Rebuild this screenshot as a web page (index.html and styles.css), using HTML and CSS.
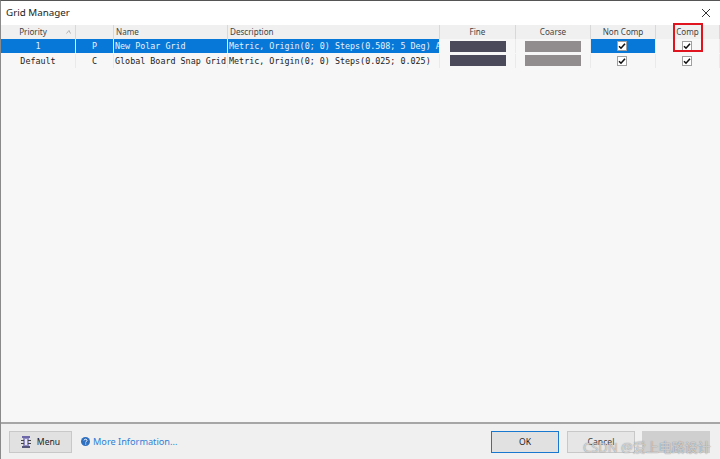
FILE: index.html
```html
<!DOCTYPE html>
<html lang="en">
<head>
<meta charset="utf-8">
<title>Grid Manager</title>
<link rel="stylesheet" href="styles.css">
</head>
<body>
<div class="window">
  <header class="titlebar">
    <span class="title">Grid Manager</span>
    <svg class="close" width="10" height="10" viewBox="0 0 10 10"><path d="M1 1L9 9M9 1L1 9" stroke="#333" stroke-width="1" fill="none"/></svg>
  </header>
  <main class="grid-area">
    <div class="row head">
      <div class="hc center priority">Priority<svg class="sort" width="5" height="4" viewBox="0 0 5 4"><path d="M0.5 3.5L3 0.5L4.5 3.5" stroke="#999" stroke-width="0.7" fill="none"/></svg></div>
      <div class="hc"></div>
      <div class="hc">Name</div>
      <div class="hc">Description</div>
      <div class="hc center">Fine</div>
      <div class="hc center">Coarse</div>
      <div class="hc center">Non Comp</div>
      <div class="hc center">Comp</div>
    </div>
    <div class="row data">
      <div class="c mono center sel">1</div>
      <div class="c mono center sel">P</div>
      <div class="c mono sel">New Polar Grid</div>
      <div class="c mono sel">Metric, Origin(0; 0) Steps(0.508; 5 Deg) A</div>
      <div class="c swatch-cell"><span class="swatch fine"></span></div>
      <div class="c swatch-cell"><span class="swatch coarse"></span></div>
      <div class="c check-cell sel"><span class="check"><svg width="8" height="8" viewBox="0 0 8 8"><path d="M1 4.2L3 6.2L7 1.8" stroke="#111" stroke-width="1.6" fill="none"/></svg></span></div>
      <div class="c check-cell"><span class="check"><svg width="8" height="8" viewBox="0 0 8 8"><path d="M1 4.2L3 6.2L7 1.8" stroke="#111" stroke-width="1.6" fill="none"/></svg></span></div>
    </div>
    <div class="row data">
      <div class="c mono center">Default</div>
      <div class="c mono center">C</div>
      <div class="c mono">Global Board Snap Grid</div>
      <div class="c mono">Metric, Origin(0; 0) Steps(0.025; 0.025)</div>
      <div class="c swatch-cell"><span class="swatch fine"></span></div>
      <div class="c swatch-cell"><span class="swatch coarse"></span></div>
      <div class="c check-cell"><span class="check"><svg width="8" height="8" viewBox="0 0 8 8"><path d="M1 4.2L3 6.2L7 1.8" stroke="#111" stroke-width="1.6" fill="none"/></svg></span></div>
      <div class="c check-cell"><span class="check"><svg width="8" height="8" viewBox="0 0 8 8"><path d="M1 4.2L3 6.2L7 1.8" stroke="#111" stroke-width="1.6" fill="none"/></svg></span></div>
    </div>
    <div class="highlight"></div>
  </main>
  <footer class="footer">
    <button class="btn menu">
      <svg width="10" height="12" viewBox="0 0 10 12"><path d="M1 0h8v2H1z" fill="#6f68a8"/><path d="M2 2h6v8H2z" fill="#8f8bc4"/><path d="M0 4h3v1H0zM0 7h3v1H0zM7 4h3v1H7zM7 7h3v1H7z" fill="#444"/><path d="M1 10h8v2H1z" fill="#55557a"/><path d="M4 3h2v6H4z" fill="#e8e8f4"/></svg>
      <span>Menu</span>
    </button>
    <a class="info">
      <svg width="9" height="9" viewBox="0 0 9 9"><circle cx="4.5" cy="4.5" r="4.5" fill="#2f6fc0"/><path d="M3 3.4c.2-1.6 3-1.6 3 0 0 1-1.3 1-1.3 2.1" stroke="#fff" fill="none"/><path d="M4.2 6.6h1v1h-1z" fill="#fff"/></svg>
      More Information...
    </a>
    <div class="spacer"></div>
    <button class="btn ok">OK</button>
    <button class="btn cancel">Cancel</button>
    <button class="btn apply"></button>
    <div class="watermark">CSDN @爱上电路设计</div>
  </footer>
</div>
</body>
</html>
```
FILE: styles.css
```css
* { box-sizing: border-box; }
html, body { margin: 0; height: 100%; }
body { font-family: "Noto Sans", "Open Sans", sans-serif; color: #333; overflow: hidden; }
.window {
  width: 720px; height: 459px;
  display: flex; flex-direction: column;
  border-top: 1px solid #555;
  border-left: 1px solid #8a8a8a;
  background: #fff;
}
.titlebar {
  height: 24px; flex: none;
  display: flex; align-items: center; justify-content: space-between;
  padding: 0 9px 1px 5px;
  background: #fff;
}
.title { font-size: 9.8px; color: #222; }
.close { display: block; }
.grid-area {
  position: relative;
  flex: 1;
  background: #f7f7f7;
  border-bottom: 2px solid #a6a6a6;
}
.row {
  display: grid;
  grid-template-columns: 75px 38px 114px 212px 76px 75px 65px 64px;
}
.head { height: 14px; background: #f0f0f0; }
.hc {
  position: relative;
  font-size: 8.1px; line-height: 14px; color: #444;
  padding-left: 2px;
  border-right: 1px solid #d8d8d8;
  white-space: nowrap; overflow: hidden;
}
.center { text-align: center; padding-left: 0; }
.hc.priority { padding-right: 10px; }
.sort { position: absolute; left: 65px; top: 5px; }
.data { height: 14.5px; }
.c {
  height: 14px;
  border-right: 1px solid #eaeaea;
  white-space: nowrap; overflow: hidden;
  line-height: 15px;
}
.mono { font-family: "DejaVu Sans Mono", monospace; font-size: 8.4px; color: #222; padding-left: 1px; }
.mono.center { padding-left: 0; }
.sel, .mono.sel { background: #0878d8; color: #e6f1fb; }
.swatch-cell, .check-cell { display: flex; align-items: center; justify-content: center; }
.check-cell { padding-right: 2px; }
.swatch { display: block; width: 56px; height: 11px; }
.fine { background: #4b4a5a; }
.coarse { background: #918d8f; }
.check {
  display: flex; align-items: center; justify-content: center;
  width: 10px; height: 10px;
  background: #fff; border: 1px solid #a0a0a0;
}
.highlight {
  position: absolute; left: 672px; top: -2px;
  width: 30px; height: 29px;
  border: 2px solid #e0141e;
}
.footer {
  position: relative;
  height: 35px; flex: none;
  display: flex; align-items: center;
  padding: 0 0 0 8px;
  background: #f0f0f0;
}
.btn {
  height: 22px; padding: 0;
  display: flex; align-items: center; justify-content: center; gap: 6px;
  background: #e1e1e1; border: 1px solid #c8c8c8;
  font: 8.6px "Noto Sans", sans-serif; color: #222;
}
.menu { width: 63px; }
.info {
  margin-left: 9px;
  display: flex; align-items: center; gap: 3px;
  font-size: 9.2px; color: #2f80d8;
}
.spacer { flex: 1; }
.ok { width: 68px; border: 1.5px solid #1878d0; }
.cancel { width: 68px; margin-left: 8px; background: #e6e6e6; color: #444; }
.apply { width: 68px; margin-left: 7px; margin-right: 10px; background: #cfcfcf; border-color: #cfcfcf; }
.watermark {
  position: absolute; left: 582px; top: 15px;
  font-size: 13px; line-height: 16px;
  font-family: "Noto Sans", "Noto Sans CJK SC", sans-serif;
  color: rgba(255,255,255,.65);
  text-shadow: 0 0 1px rgba(70,70,70,.8);
  white-space: nowrap;
}
```
